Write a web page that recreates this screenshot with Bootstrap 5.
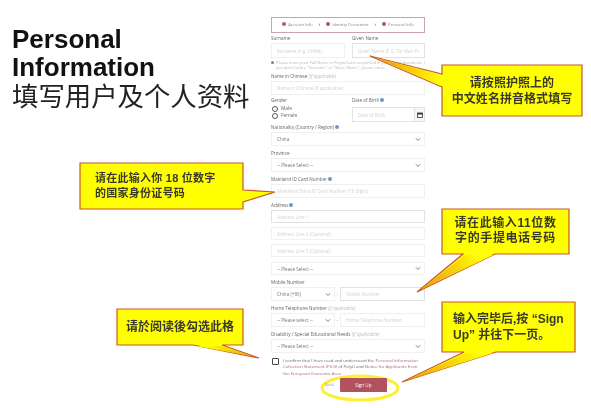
<!DOCTYPE html>
<html lang="zh">
<head>
<meta charset="utf-8">
<title>Personal Information</title>
<link href="https://cdn.jsdelivr.net/npm/bootstrap@5.3.0/dist/css/bootstrap.min.css" rel="stylesheet">
<style>
html,body{margin:0;background:#fff;overflow:hidden}
.sheet{position:relative;width:591px;height:408px;background:#fff;filter:blur(.35px);overflow:hidden}
.title-col{width:271px;padding:25px 0 0 12px;flex:none}
.title-txt{font-family:"Liberation Sans","Noto Sans CJK SC",sans-serif;font-size:26px;line-height:28px;font-weight:700;color:#111;margin:0}
.title-cn{display:block;margin-top:2px;font-family:"Liberation Sans","Noto Sans CJK SC",sans-serif;font-size:26.4px;line-height:28px;font-weight:400;color:#222;white-space:nowrap}
.form-col{width:154px;padding-top:17px;flex:none;font-family:"Open Sans",sans-serif;font-size:4.6px;color:#666}
.steps-box{height:16px;border:1px solid #c9a4aa;margin-bottom:2px;gap:6px;color:#888;font-size:4.2px}
.step-dot{display:inline-block;width:4px;height:4px;border-radius:50%;background:#a5606c;margin-right:2px}
.step-sep{color:#333;font-size:5px}
.fld-label{display:block;height:6px;line-height:6px;margin:0 0 2px;white-space:nowrap;color:#666}
.fld-label em{font-style:italic;color:#bbb}
.inf{display:inline-block;width:4px;height:4px;border-radius:50%;background:#6f95c4;margin-left:1px;vertical-align:-.3px}
.fld{margin-bottom:4px}
.form-control.ctl,.form-select.ctl{height:14px;min-height:0;padding:0 5px;font-size:4.6px;line-height:12px;border:1px solid #f0f0f0;border-radius:0;color:#777;font-family:"Open Sans",sans-serif;box-shadow:none}
.form-select.ctl{background-size:6px 5px;background-position:right 3px center;padding-right:10px}
.ctl::placeholder{color:#d2d2d2;opacity:1}
.form-control.ctl.tall{height:15px}
.form-control.ctl.dark{border-color:#e2e2e2}
.form-control.ctl.slim,.form-select.ctl.slim{height:13px}
.half{width:74px;flex:none}
.half-r{width:73px;flex:none}
.gap-col{gap:7px}
.note-line{height:10px;font-size:4px;color:#b5b5b5;margin:2px 0 3px;overflow:hidden;display:flex;gap:2px}
.note-txt{line-height:5px;white-space:nowrap}
.note-txt span{display:block;height:5px}
.note-dot{flex:none;width:3px;height:3px;border-radius:50%;background:#6d8a7d;margin-top:1px}
.gender-row{padding-top:2px;margin-bottom:2px}
.radio-line{height:7px;line-height:7px;gap:3px;padding-left:1px;font-size:4.8px}
.radio-mark{width:6px;height:6px;border:1px solid #555;border-radius:50%;display:inline-block}
.cal-btn{width:10px;height:15px;flex:none;border:1px solid #e2e2e2;border-left:0;background:#f6f6f6}
.dob-wrap{padding-top:2px}
.sep-mark{width:5px;flex:none;text-align:center;color:#888}
.sel-mob{width:64px;flex:none}
.addr-gap{margin-bottom:4px}
.addr-last{margin-bottom:5px}
.addr-end{margin-bottom:4px}
.check-row{height:21px;gap:4px;font-size:4.3px;color:#666;padding-left:1px}
.check-line{display:block;height:6.4px;line-height:6.4px;white-space:nowrap}
.form-check-input.chk{width:7px;height:7px;flex:none;margin:1px 0 0;border:1px solid #444;border-radius:1px}
.red-lnk{color:#b5606c;text-decoration:none}
.foot-row{gap:6px;padding-left:54px;position:relative;z-index:3}
.back-lnk{color:#999;font-size:4px}
.btn.sign-btn{width:47px;height:14px;padding:0;background:#b3525f;border:0;border-radius:1px;color:#fff;font-size:4.6px;line-height:14px;font-family:"Open Sans",sans-serif}
.overlay-art{position:absolute;left:0;top:0;width:591px;height:408px;pointer-events:none}
.bubble{fill:#ffff00;stroke:#c9572c;stroke-width:1.2}
.tail-tint{stroke:none}
.ring{fill:none;stroke:#fdf033;stroke-width:3}
.say{position:absolute;font-family:"Liberation Sans","Noto Sans CJK SC",sans-serif;color:#3a3a2a;font-weight:700;font-size:12px;line-height:16px;white-space:nowrap}
.say-a{left:442px;top:75px;width:140px;text-align:center;letter-spacing:.05px}
.say-b{left:95px;top:171px;font-size:11px;line-height:15px;letter-spacing:.25px}
.say-c{left:442px;top:216px;width:127px;text-align:center;line-height:15px;letter-spacing:.6px}
.say-d{left:126px;top:319px}
.say-e{left:453px;top:311px}
</style>
</head>
<body>
<div class="sheet d-flex">
  <div class="title-col">
    <h1 class="title-txt">Personal<br>Information<span class="title-cn">填写用户及个人资料</span></h1>
  </div>
  <form class="form-col">
    <div class="steps-box d-flex align-items-center justify-content-center">
      <span><i class="step-dot"></i>Account Info</span><span class="step-sep">›</span>
      <span><i class="step-dot"></i>Identity Document</span><span class="step-sep">›</span>
      <span><i class="step-dot"></i>Personal Info</span>
    </div>
    <div class="d-flex gap-col">
      <div class="half"><label class="fld-label">Surname</label><input class="form-control ctl tall" placeholder="Surname (e.g. CHAN)"></div>
      <div class="half-r"><label class="fld-label">Given Name</label><input class="form-control ctl tall dark" placeholder="Given Name (E.G. Tai Man Peter)"></div>
    </div>
    <div class="note-line"><i class="note-dot"></i><div class="note-txt"><span>Please enter your Full Name in Pinyin/Latin as printed in your travel document. If</span><span>you don't hold a "Surname" or "Given Name", please enter</span></div></div>
    <div><label class="fld-label">Name in Chinese <em>(If applicable)</em></label><input class="form-control ctl" placeholder="Name in Chinese (If applicable)"></div>
    <div class="d-flex gap-col gender-row">
      <div class="half"><label class="fld-label">Gender</label>
        <div class="radio-line d-flex align-items-center"><i class="radio-mark"></i>Male</div>
        <div class="radio-line d-flex align-items-center"><i class="radio-mark"></i>Female</div>
      </div>
      <div class="half-r"><label class="fld-label">Date of Birth<i class="inf"></i></label>
        <div class="d-flex dob-wrap"><input class="form-control ctl tall dark" placeholder="Date of Birth"><span class="cal-btn d-flex align-items-center justify-content-center"><svg width="6" height="6" viewBox="0 0 6 6"><rect x=".5" y="1" width="5" height="4.5" fill="none" stroke="#333" stroke-width=".8"/><rect x=".5" y="1" width="5" height="1.5" fill="#333"/></svg></span></div>
      </div>
    </div>
    <div class="fld"><label class="fld-label">Nationality (Country / Region)<i class="inf"></i></label><select class="form-select ctl"><option>China</option></select></div>
    <div class="fld"><label class="fld-label">Province</label><select class="form-select ctl"><option>-- Please Select --</option></select></div>
    <div class="fld"><label class="fld-label">Mainland ID Card Number<i class="inf"></i></label><input class="form-control ctl" placeholder="Mainland China ID Card Number (18 digits)"></div>
    <div><label class="fld-label">Address<i class="inf"></i></label>
      <input class="form-control ctl slim dark addr-gap" placeholder="Address Line 1">
      <input class="form-control ctl slim addr-gap" placeholder="Address Line 2 (Optional)">
      <input class="form-control ctl slim addr-last" placeholder="Address Line 3 (Optional)">
      <select class="form-select ctl slim addr-end"><option>-- Please Select --</option></select>
    </div>
    <div class="fld"><label class="fld-label">Mobile Number</label>
      <div class="d-flex align-items-center"><select class="form-select ctl sel-mob"><option>China (+86)</option></select><span class="sep-mark">-</span><input class="form-control ctl dark" placeholder="Mobile Number"></div>
    </div>
    <div class="fld"><label class="fld-label">Home Telephone Number <em>(If applicable)</em></label>
      <div class="d-flex align-items-center"><select class="form-select ctl sel-mob"><option>-- Please select --</option></select><span class="sep-mark">-</span><input class="form-control ctl" placeholder="Home Telephone Number"></div>
    </div>
    <div class="fld"><label class="fld-label">Disability / Special Educational Needs <em>(If applicable)</em></label><select class="form-select ctl"><option>-- Please Select --</option></select></div>
    <div class="check-row d-flex">
      <input class="form-check-input chk" type="checkbox">
      <div>
        <span class="check-line">I confirm that I have read and understood the <a class="red-lnk" href="#">Personal Information</a></span>
        <span class="check-line"><a class="red-lnk" href="#">Collection Statement (PICS)</a> of PolyU and <a class="red-lnk" href="#">Notice for Applicants from</a></span>
        <span class="check-line"><a class="red-lnk" href="#">the European Economic Area</a></span>
      </div>
    </div>
    <div class="foot-row d-flex align-items-center"><span class="back-lnk">Back</span><button class="btn sign-btn" type="button">Sign Up</button></div>
  </form>
  <svg class="overlay-art" viewBox="0 0 591 408" aria-hidden="true">
    <defs>
      <linearGradient id="tintA" gradientUnits="userSpaceOnUse" x1="442" y1="80" x2="370" y2="56"><stop offset="0" stop-color="#ffff00"/><stop offset="1" stop-color="#e8901a"/></linearGradient>
      <linearGradient id="tintC" gradientUnits="userSpaceOnUse" x1="479" y1="254" x2="417" y2="292"><stop offset="0" stop-color="#ffff00"/><stop offset="1" stop-color="#e8901a"/></linearGradient>
      <linearGradient id="tintD" gradientUnits="userSpaceOnUse" x1="207" y1="345" x2="259" y2="358"><stop offset="0" stop-color="#ffff00"/><stop offset="1" stop-color="#e8901a"/></linearGradient>
      <linearGradient id="tintE" gradientUnits="userSpaceOnUse" x1="480" y1="352" x2="402" y2="382"><stop offset="0" stop-color="#ffff00"/><stop offset="1" stop-color="#e8901a"/></linearGradient>
    </defs>
    <polygon class="bubble" points="442,65 582,65 582,116 442,116 442,87 370,56 442,74"/>
    <polygon class="tail-tint" fill="url(#tintA)" points="441,75 441,86 373,57"/>
    <polygon class="bubble" points="80,163 243,163 243,190 275,192 243,202 243,209 80,209"/>
    <polygon class="bubble" points="442,209 569,209 569,254 495,254 417,292 463,254 442,254"/>
    <polygon class="tail-tint" fill="url(#tintC)" points="465,255 493,255 420,290"/>
    <polygon class="bubble" points="117,309 243,309 243,345 222,345 259,358 193,345 117,345"/>
    <polygon class="tail-tint" fill="url(#tintD)" points="196,346 220,346 256,357"/>
    <polygon class="bubble" points="442,302 575,302 575,352 496,352 402,382 464,352 442,352"/>
    <polygon class="tail-tint" fill="url(#tintE)" points="466,353 493,353 405,381"/>
    <ellipse class="ring" cx="360" cy="388" rx="38" ry="12"/>
  </svg>
  <div class="say say-a">请按照护照上的<br>中文姓名拼音格式填写</div>
  <div class="say say-b">请在此输入你 18 位数字<br>的国家身份证号码</div>
  <div class="say say-c">请在此输入11位数<br>字的手提电话号码</div>
  <div class="say say-d">请於阅读後勾选此格</div>
  <div class="say say-e">输入完毕后,按 “Sign<br>Up” 并往下一页。</div>
</div>
<script src="https://cdn.jsdelivr.net/npm/bootstrap@5.3.0/dist/js/bootstrap.bundle.min.js"></script>
</body>
</html>
